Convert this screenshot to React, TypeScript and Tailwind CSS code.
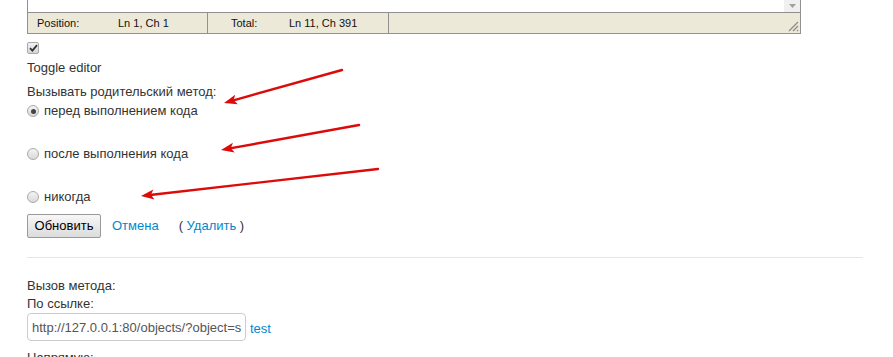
import React from "react";

const arrows = [
  { x1: 342, y1: 70, x2: 224, y2: 103 },
  { x1: 359, y1: 125, x2: 221, y2: 150 },
  { x1: 378, y1: 169, x2: 141, y2: 196 },
];

function Arrow({ x1, y1, x2, y2 }: { x1: number; y1: number; x2: number; y2: number }) {
  const dx = x2 - x1;
  const dy = y2 - y1;
  const len = Math.hypot(dx, dy);
  const ux = dx / len;
  const uy = dy / len;
  const headLen = 13;
  const headW = 5;
  const bx = x2 - ux * headLen;
  const by = y2 - uy * headLen;
  const pts = [
    `${x2},${y2}`,
    `${bx - uy * headW},${by + ux * headW}`,
    `${bx + ux * 3},${by + uy * 3}`,
    `${bx + uy * headW},${by - ux * headW}`,
  ].join(" ");
  return (
    <g>
      <line x1={x1} y1={y1} x2={bx + ux * 4} y2={by + uy * 4} stroke="#dd0a0a" strokeWidth="2.4" strokeLinecap="round" />
      <polygon points={pts} fill="#dd0a0a" />
    </g>
  );
}

function Radio({ checked }: { checked?: boolean }) {
  return (
    <span className="relative inline-flex w-[12px] h-[12px] rounded-full border border-[#a9a9a9] bg-gradient-to-b from-[#f4f4f4] to-[#d9d9d9] items-center justify-center shrink-0">
      {checked && <span className="w-[5px] h-[5px] rounded-full bg-[#444]" />}
    </span>
  );
}

export default function App() {
  return (
    <div className="relative w-full min-h-[357px] bg-white text-[#333] font-['Liberation_Sans',Arial,sans-serif] overflow-hidden">
      <div className="flex flex-col pl-[27px]">
        {/* editor bottom */}
        <div className="w-[774px]">
          <div className="h-[12px] border-x border-[#919191] bg-white flex justify-end">
            <div className="w-[16px] h-full bg-[#f0f0f0] flex items-start justify-center pt-[4px]">
              <svg width="7" height="4" viewBox="0 0 7 4">
                <path d="M0 0h7L3.5 4z" fill="#a0a0a0" />
              </svg>
            </div>
          </div>
          <div className="relative h-[22px] border border-[#919191] bg-[#ece9d8] flex text-[11px] leading-[20px] text-[#111]">
            <div className="w-[180px] flex pl-[9px] border-r border-[#919191]">
              <span className="w-[81px]">Position:</span>
              <span>Ln 1, Ch 1</span>
            </div>
            <div className="w-[181px] flex pl-[23px] border-r border-[#919191]">
              <span className="w-[58px]">Total:</span>
              <span>Ln 11, Ch 391</span>
            </div>
            <svg className="absolute right-[1px] bottom-[1px]" width="12" height="12" viewBox="0 0 12 12">
              <path d="M11 2L2 11M11 6L6 11M11 10L10 11" stroke="#8a8a8a" strokeWidth="1.2" />
            </svg>
          </div>
        </div>

        {/* toggle checkbox */}
        <span className="mt-[8px] w-[12px] h-[12px] rounded-[2px] border border-[#a9a9a9] bg-gradient-to-b from-[#f2f2f2] to-[#d6d6d6] flex items-center justify-center">
          <svg width="9" height="8" viewBox="0 0 9 8">
            <path d="M1 4.2L3.4 6.6L8 1.2" fill="none" stroke="#333" strokeWidth="1.8" />
          </svg>
        </span>
        <div className="mt-[6px] h-[16px] text-[13px] leading-[16px]">Toggle editor</div>

        <div className="mt-[8px] h-[16px] text-[13px] leading-[16px]">Вызывать родительский метод:</div>

        <label className="mt-[3px] h-[16px] flex items-center gap-[5px] text-[13px] leading-[16px]">
          <Radio checked />
          <span>перед выполнением кода</span>
        </label>
        <label className="mt-[27px] h-[16px] flex items-center gap-[5px] text-[13px] leading-[16px]">
          <Radio />
          <span>после выполнения кода</span>
        </label>
        <label className="mt-[27px] h-[16px] flex items-center gap-[5px] text-[13px] leading-[16px]">
          <Radio />
          <span>никогда</span>
        </label>

        <div className="mt-[9px] h-[24px] flex items-center text-[13px]">
          <button
            type="button"
            className="w-[74px] h-[24px] rounded-[2px] border border-[#9a9a9a] bg-gradient-to-b from-[#f7f7f7] to-[#dcdcdc] text-[13px] text-black leading-[22px]"
          >
            Обновить
          </button>
          <a className="ml-[11px] text-[#0088cc]">Отмена</a>
          <span className="ml-[20px]">
            ( <a className="text-[#0088cc]">Удалить</a> )
          </span>
        </div>

        <div className="mt-[19px] w-[836px] h-px bg-[#e6e6e6]" />

        <div className="mt-[20px] h-[16px] text-[13px] leading-[16px]">Вызов метода:</div>
        <div className="mt-[2px] h-[16px] text-[13px] leading-[16px]">По ссылке:</div>
        <div className="mt-[1px] flex items-end gap-[4px]">
          <input
            readOnly
            value="http://127.0.0.1:80/objects/?object=self&op=m&m=test"
            className="w-[219px] h-[28px] rounded-[4px] border border-[#cccccc] px-[4px] text-[13px] text-[#555] outline-none"
          />
          <a className="text-[13px] text-[#0088cc] leading-[16px] mb-[4px]">test</a>
        </div>
        <div className="mt-[9px] h-[16px] text-[13px] leading-[16px]">Напрямую:</div>
      </div>

      <svg className="absolute inset-0 pointer-events-none" width="893" height="357">
        {arrows.map((a, i) => (
          <Arrow key={i} {...a} />
        ))}
      </svg>
    </div>
  );
}
